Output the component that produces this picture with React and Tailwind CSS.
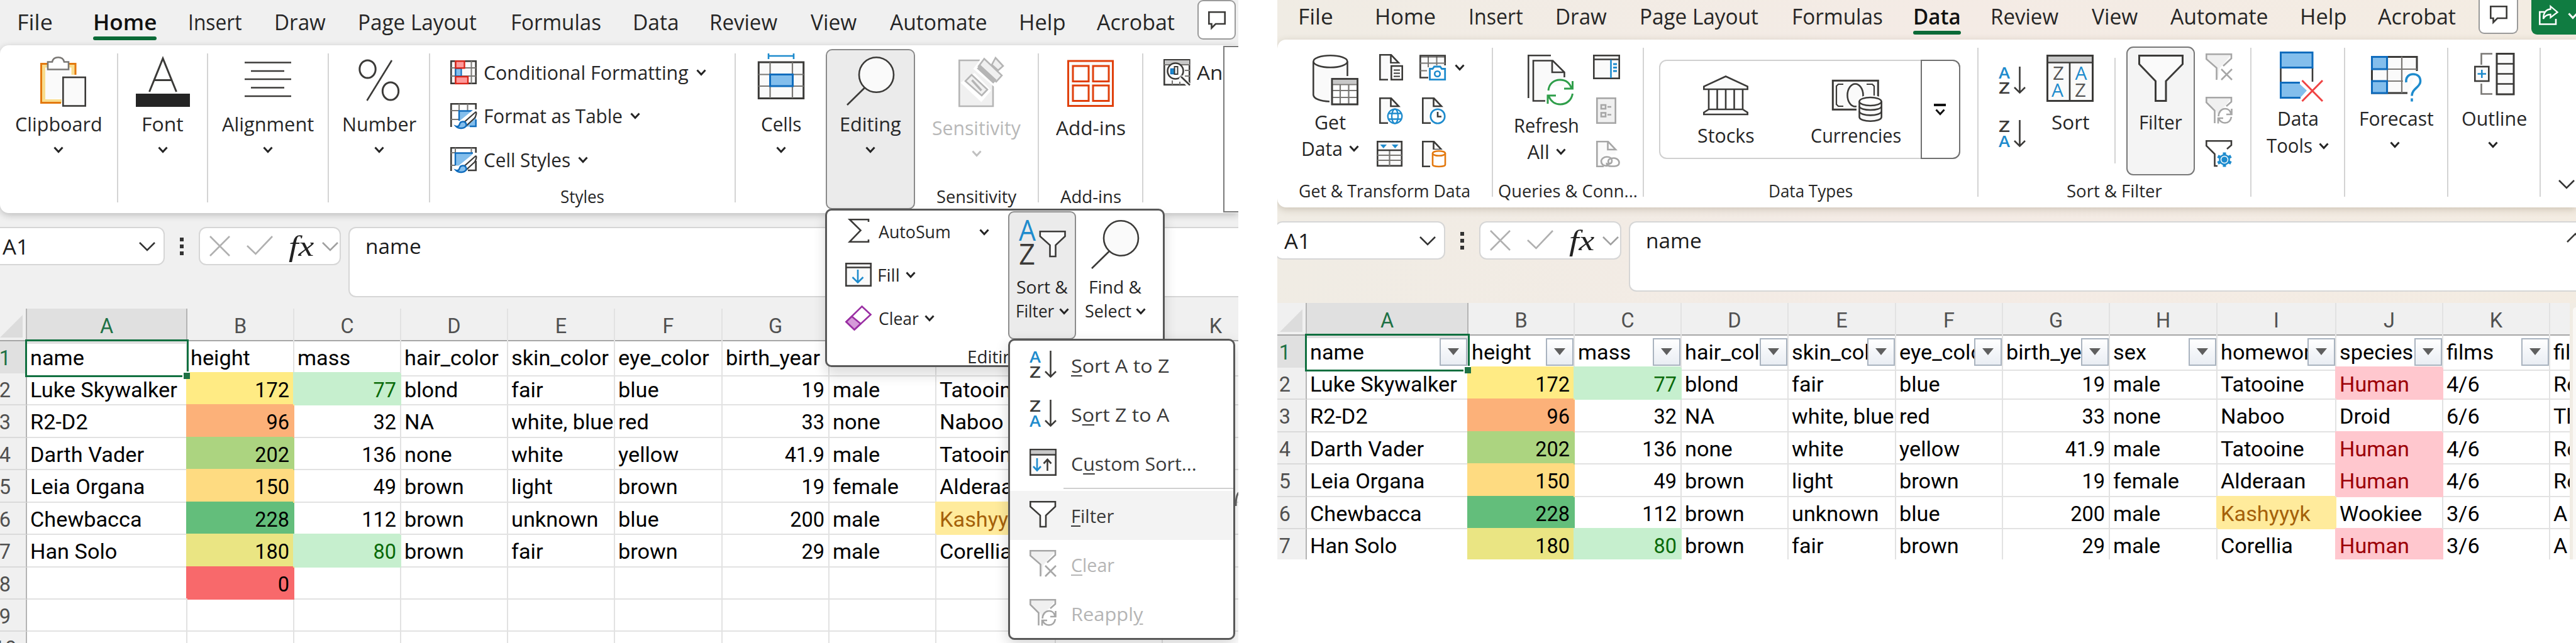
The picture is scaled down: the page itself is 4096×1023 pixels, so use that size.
import React, { useLayoutEffect, useRef, useState } from 'react';

const INK = '#3b3a38';
const MID = '#797774';
const BLUE = '#1e8bcd';
const DEEP = '#0f6cbd';
const SKY = '#83beec';
const PAPER = '#fafafa';
const MUTED = '#a6a6a6';

/* Text condensed or widened to fill the width given by its class. */
function T({ className = '', children }) {
  const outer = useRef(null);
  const inner = useRef(null);
  const [scale, setScale] = useState(1);
  useLayoutEffect(() => {
    setScale(outer.current.clientWidth / inner.current.offsetWidth);
  }, []);
  return (
    <span ref={outer} className={'block shrink-0 whitespace-nowrap ' + className}>
      <span ref={inner} className="inline-block origin-left" style={{ transform: `scaleX(${scale})` }}>
        {children}
      </span>
    </span>
  );
}

function Svg({ w, h, className = '', children, stroke = INK, sw = 2.6 }) {
  return (
    <svg width={w} height={h} viewBox={`0 0 ${w} ${h}`} fill="none" stroke={stroke} strokeWidth={sw} className={'block shrink-0 overflow-visible ' + className}>
      {children}
    </svg>
  );
}

const Chev = ({ className = '', color = '#242424' }) => (
  <Svg w={16} h={10} stroke={color} sw={3} className={className}><path d="M1.5 1.5 8 8.5 14.5 1.5" /></Svg>
);
const WideChev = ({ className = '', color = '#333' }) => (
  <Svg w={26} h={14} stroke={color} sw={2.6} className={className}><path d="M1 1 13 13 25 1" /></Svg>
);

/* ---------- icons ---------- */
const ClipboardIcon = () => (
  <Svg w={73} h={80}>
    <path d="M34 74H1.5V11.5H56V29" fill="#fff" stroke="none" />
    <path d="M34 71H5V14.5H52.5V29" stroke="#f9dc8d" strokeWidth="6" />
    <path d="M33 73.5H1.5V11.5H56V29" stroke="#e3790f" strokeWidth="3" />
    <path d="M8 68V18H48V30H33V66Z" fill={PAPER} stroke="none" />
    <path d="M12 20.5V8.5H19C20 3.5 24 1.2 28.5 1.2S37 3.5 38 8.5H45V20.5Z" fill="#fff" stroke={MID} />
    <rect x="36.3" y="33" width="35.4" height="45.5" fill={PAPER} />
  </Svg>
);
const FontIcon = () => (
  <Svg w={86} h={80}>
    <path d="M21.5 56 43 3 64.5 56M29 37.5H57" strokeWidth="3" />
    <rect x="0" y="59" width="86" height="21" fill="#242424" stroke="none" />
  </Svg>
);
const AlignIcon = () => (
  <Svg w={74} h={80}><path d="M0 9.5H74M10 23H63M0 36H74M10 49.5H63M0 63H74" /></Svg>
);
const PercentIcon = () => (
  <Svg w={66} h={80} sw={3}><ellipse cx="14.5" cy="20" rx="12.7" ry="14" /><ellipse cx="51" cy="55" rx="12.7" ry="14" /><path d="M53 6 13.5 70" strokeWidth="2.6" /></Svg>
);
const CondFormatIcon = () => (
  <Svg w={42} h={38}>
    <rect x="1.3" y="1.3" width="39.4" height="35.4" fill={PAPER} />
    <path d="M8 1V37M33.5 1V37M1 12H41M1 25H41" stroke={MID} strokeWidth="2" />
    <rect x="8.5" y="13" width="9" height="12" fill={SKY} stroke={DEEP} strokeWidth="2" />
    <rect x="8.5" y="1.3" width="14" height="11" fill="#ff9a9a" stroke="#d9271b" strokeWidth="2.4" />
    <rect x="8.5" y="26" width="19.5" height="11" fill="#ff9a9a" stroke="#d9271b" strokeWidth="2.4" />
  </Svg>
);
const Brush = () => (
  <g>
    <path d="M42 11 20 40H8V34L36 11Z" fill="#fff" stroke="none" />
    <path d="M39.5 15C43 12 41 21 38.5 24L25.5 36 22 30.5Z" fill="#fff" strokeWidth="2.2" />
    <path d="M21 29.5C17 29 15 31.5 14.5 34.5C13.5 37 11.5 37.8 9 37C13 41.5 23 41 25.5 35.5C25.5 32 24 30 21 29.5Z" fill={SKY} stroke={DEEP} strokeWidth="2.4" />
  </g>
);
const TableStyleIcon = () => (
  <Svg w={42} h={40}>
    <path d="M1.3 38V1.3H40.7V10" fill="none" />
    <path d="M14 1V12M27.5 1V12M1 12H14M1 26H13" stroke={MID} strokeWidth="2" />
    <rect x="14" y="12.5" width="27" height="25" fill={SKY} stroke="none" />
    <path d="M14 28V12.5H36M40.7 26V37H31" stroke={DEEP} strokeWidth="2.4" />
    <Brush />
  </Svg>
);
const CellStyleIcon = () => (
  <Svg w={42} h={40}>
    <path d="M1.3 38V1.3H40.7V9M40.7 22V37H28" />
    <path d="M8 1V9M33.5 1V9M1 9H8M1 29H8" stroke={MID} strokeWidth="2" />
    <rect x="8" y="9.5" width="27" height="20" fill={SKY} stroke="none" />
    <path d="M8 29V9.5H36" stroke={DEEP} strokeWidth="2.4" />
    <Brush />
  </Svg>
);
const CellsIcon = () => (
  <Svg w={74} h={80}>
    <path d="M17 -1H57M17 -5V4M57 -5V4" stroke={BLUE} />
    <rect x="1.3" y="9" width="71.4" height="57.5" fill={PAPER} strokeWidth="3" />
    <path d="M19.5 9V66M55 9V66M1 28.5H73M1 47H73" stroke={MID} strokeWidth="2.2" />
    <rect x="19.5" y="28.5" width="36" height="18.5" fill={SKY} stroke={DEEP} strokeWidth="3" />
  </Svg>
);
const LensIcon = ({ fill = PAPER }) => (
  <Svg w={76} h={78}><ellipse cx="47.5" cy="29" rx="27.5" ry="27.8" fill={fill} /><path d="M29 49.5 1 77" /></Svg>
);
const SensIcon = () => (
  <Svg w={72} h={80} stroke="#b5b5b5">
    <path d="M55 40V79H1.3V6H34" fill="#f0f0f0" />
    <path d="M25 32 10.5 42 36 66 46 54Z" fill="#f0f0f0" strokeWidth="9" stroke="#fff" />
    <path d="M21 29 11 39 37 62 46 52.5Z" fill="#f0f0f0" />
    <path d="M21.5 37.5 36.5 54" strokeWidth="3.5" />
    <path d="M29 19 41 3 69 30 57 43Z" fill="#fff" stroke="#fff" strokeWidth="8" />
    <path d="M32 15.500 41 3.500 69 30 60 40Z" fill="#f0f0f0" />
    <path d="M32 16 58 40" strokeWidth="8" />
    <path d="M53 13 59 2 71 15 63 22Z" fill="#f0f0f0" />
  </Svg>
);
const AddinsIcon = () => (
  <Svg w={74} h={80} stroke="#e0400c" sw={3}>
    <rect x="1.500" y="7" width="71" height="71.500" fill={PAPER} />
    <rect x="9" y="15" width="25" height="24.500" fill="#fff" /><rect x="41" y="15" width="25" height="24.500" fill="#fff" />
    <rect x="9" y="46" width="25" height="24.500" fill="#fff" /><rect x="41" y="46" width="25" height="24.500" fill="#fff" />
  </Svg>
);
const AnalyzeIcon = () => (
  <Svg w={43} h={42}>
    <rect x="1.300" y="1.300" width="40" height="39.500" fill={PAPER} />
    <rect x="2" y="2" width="39" height="6" fill="#c8c8c8" stroke="none" />
    <path d="M1 9H42M34 18H42M34 27H42M14 34V41M26 36V41" stroke={MID} strokeWidth="2" />
    <circle cx="19" cy="19" r="12.500" fill="#fff" />
    <rect x="11.500" y="15.500" width="6" height="8" fill={BLUE} stroke={DEEP} strokeWidth="1.500" />
    <rect x="17.500" y="12" width="5" height="12" strokeWidth="2" />
    <path d="M27 28 42 43" stroke="#fff" strokeWidth="7" /><path d="M28 28 42 41.500" />
  </Svg>
);
const CommentIcon = () => (
  <Svg w={28} h={28} sw={2.600}><path d="M1.300 1.300H26.700V20H12L5.500 26.500V20H1.300Z" /></Svg>
);
const SigmaIcon = () => (
  <Svg w={42} h={38} className="-mt-1"><path d="M37 5V1.300H7L24.500 18.500 7 36.700H37V33" /></Svg>
);
const FillIcon = () => (
  <Svg w={42} h={38}><rect x="1.300" y="1.300" width="39.400" height="35.400" fill={PAPER} /><path d="M1 7.500H41" /><path d="M20 11V32M11.500 23 20 31.500 28.500 23" stroke={BLUE} /></Svg>
);
const EraserIcon = () => (
  <Svg w={42} h={40} stroke="#9a2fa3"><path d="M26.500 1.500 40.500 14.500 14.500 38.500 1.500 26Z" fill="#fff" /><path d="M10.500 17.500 24.500 29 14.500 38.500 1.500 26Z" fill="#d59ad9" /></Svg>
);
const Funnel = 'M1.300 1.300H41V9L26 23V41H17V23L1.300 9Z';
const SortFilterIcon = () => (
  <Svg w={75} h={72}>
    <g stroke="none" className="font-['Open_Sans']" fontSize="45" fontWeight="400">
      <text x="0" y="32" textLength="27" lengthAdjust="spacingAndGlyphs" fill={BLUE}>A</text>
      <text x="0" y="70" textLength="26" lengthAdjust="spacingAndGlyphs" fill={INK}>Z</text>
    </g>
    <g transform="translate(32.500 16)"><path d={Funnel} fill={PAPER} /></g>
  </Svg>
);
function AZIcon({ flip }) {
  return (
    <Svg w={43} h={43}>
      <g stroke="none" className="font-['Open_Sans']" fontSize="26" fontWeight="600">
        <text x="0" y="19" textLength="18" lengthAdjust="spacingAndGlyphs" fill={flip ? INK : BLUE}>{flip ? 'Z' : 'A'}</text>
        <text x="0" y="42.500" textLength="18" lengthAdjust="spacingAndGlyphs" fill={flip ? BLUE : INK}>{flip ? 'A' : 'Z'}</text>
      </g>
      <path d="M33.500 0V42M25 33 33.500 41.500 42 33" />
    </Svg>
  );
}
const CustomSortIcon = () => (
  <Svg w={43} h={43}>
    <rect x="1.300" y="1.300" width="40.400" height="40.400" fill={PAPER} />
    <rect x="2.500" y="2.500" width="38" height="6" fill="#c8c8c8" stroke="none" /><path d="M1 9.500H42" />
    <path d="M12 15V34M6 28 12 34.500 18 28" stroke={BLUE} /><path d="M28.500 35V17M22.500 23.500 28.500 17 34.500 23.500" />
  </Svg>
);
const FilterIcon = () => <Svg w={43} h={43}><path d={Funnel} fill="#fff" /></Svg>;
const FilterX = () => (
  <Svg w={43} h={43} stroke={MUTED}><path d="M2 2H41L22 24 20 40H17V23L2 9Z" fill="#f0f0f0" stroke="none" /><path d="M17.500 42V23L1.300 9V1.300H41V8L28 20M25 25 42 42M42 25 25 42" /></Svg>
);
const Cycle = () => <path d="M20.500 31C21 24 25 19 31 19S39 22 40.500 27M41.500 19V28H33M41 32C40 38 36 41.500 31 41.500S23 39 21 35M20 42.500V34H28" />;
const FilterCycle = () => (
  <Svg w={43} h={43} stroke={MUTED}><path d="M2 2H41L30 16 18 28 17 23 2 9Z" fill="#f0f0f0" stroke="none" /><path d="M14.500 42V22L1.300 9V1.300H41V8L33 15" /><Cycle /></Svg>
);
const FilterGear = () => (
  <Svg w={43} h={43}><path d="M19 41H14.500V22L1.300 9V1.300H41V8L34 14" />
    <g stroke={BLUE}><circle cx="30" cy="31" r="3.500" fill={BLUE} /><circle cx="30" cy="31" r="7.500" />
      <path d="M30 19.500V24M30 38V42.500M19.500 25.500 23.500 27.500M40.500 25.500 36.500 27.500M19.500 36.500 23.500 34.500M40.500 36.500 36.500 34.500" strokeWidth="5" /></g>
  </Svg>
);
const BigFilterIcon = () => (
  <Svg w={72} h={75} sw={3}><path d="M1.500 1.500H70.500V15L44 42V73.500H27.500V42L1.500 15Z" fill={PAPER} /></Svg>
);
const GetDataIcon = () => (
  <Svg w={73} h={80}>
    <path d="M1.300 11V65C2 70 12 74.500 27 74.500V38H55V11" fill={PAPER} stroke="none" />
    <path d="M1.300 11V64C2 70 12 74 27 74.500M55.500 11V34" />
    <ellipse cx="28.400" cy="10.700" rx="27" ry="9.500" fill="#fff" />
    <rect x="31" y="38.500" width="40.500" height="40.500" fill="#fff" />
    <rect x="32" y="39.500" width="38.500" height="7" fill="#c8c8c8" stroke="none" />
    <path d="M31 47.500H71M31 57H71M31 68H71M44 47V79M57.500 47V79" stroke={MID} strokeWidth="2.200" />
    <rect x="31" y="38.500" width="40.500" height="40.500" />
  </Svg>
);
function Doc({ children, stroke = INK }) {
  return (
    <Svg w={38} h={42} stroke={stroke}>
      <path d="M1.300 1.300H19L31 14V40.700H1.300Z" fill={PAPER} stroke="none" />
      <path d="M14 40.700H1.300V1.300H19L31 14H18.500V1.300" />
      {children}
    </Svg>
  );
}
const DocText = () => (
  <Doc><rect x="15" y="15" width="24" height="28" fill="#fff" stroke="none" /><rect x="19.300" y="19" width="17.400" height="21.700" fill="#fff" /><path d="M23 25.500H33M23 30.500H33M23 35.500H33" strokeWidth="2" /></Doc>
);
const DocWeb = () => (
  <Doc><circle cx="25" cy="30" r="14" fill="#fff" stroke="none" /><g stroke={BLUE} strokeWidth="2.300"><circle cx="25" cy="30" r="11.300" fill="#fff" /><ellipse cx="25" cy="30" rx="5" ry="11.300" /><path d="M15 25.500H35M15 34.500H35" /></g></Doc>
);
const DocClock = () => (
  <Doc><circle cx="25" cy="30" r="14" fill="#fff" stroke="none" /><circle cx="25" cy="30" r="11.300" fill="#fff" stroke={BLUE} /><path d="M25 23V30.500H31" /></Doc>
);
const DocDb = () => (
  <Doc><rect x="13" y="14" width="27" height="30" fill="#fff" stroke="none" /><path d="M17 20V38C17 42 37 42 37 38V20" fill="#fff" stroke="#e3790f" /><ellipse cx="27" cy="20" rx="10" ry="3.800" fill="#fff" stroke="#e3790f" /></Doc>
);
const TableCamera = () => (
  <Svg w={42} h={42}>
    <path d="M14 37.500H1.300V2.500H40.700V18" fill={PAPER} />
    <path d="M1 14.500H41M1 26.500H12M14 3V21M27.500 3V18" stroke={MID} strokeWidth="2" />
    <rect x="2" y="3" width="38" height="3" fill={INK} stroke="none" opacity=".5" />
    <path d="M16.500 23.500H21L23.500 20H33L35.500 23.500H40.700V40.700H16.500Z" fill="#fff" stroke={BLUE} strokeWidth="2.800" />
    <circle cx="28.500" cy="31.500" r="4.300" stroke={BLUE} />
  </Svg>
);
const TableRange = () => (
  <Svg w={42} h={42} className="-ml-1">
    <rect x="1.300" y="1.300" width="38.500" height="38.500" fill={PAPER} />
    <path d="M1 15H40M1 23H40M1 31H40M20.500 15V40" stroke={MID} strokeWidth="2.200" /><path d="M1 15H40" />
    <path d="M5.500 6H16L10.800 12ZM24 6H34.500L29.300 12Z" fill={BLUE} stroke="none" />
  </Svg>
);
const RefreshIcon = () => (
  <Svg w={73} h={80}>
    <path d="M37 1.300H1.300V69" />
    <path d="M28 73.500H9V9.500H40L58 28V50H30V73Z" fill={PAPER} stroke="none" />
    <path d="M28 73.500H9V9.500H40L58.500 28V36M39 9.500V28H58" />
    <g stroke="#2f9e4a" strokeWidth="3"><path d="M33 57C34 46 42 40 51.500 40S67 45 70 54M71.500 42V54H58M71.500 62C70 72 62 79 52 79S37 74 33.500 66M32 78V65H45" /></g>
  </Svg>
);
const PaneIcon = () => (
  <Svg w={43} h={39}><rect x="1.300" y="1.300" width="40.400" height="36.400" fill={PAPER} /><path d="M1 7.500H42" /><path d="M28.500 8V37" stroke={BLUE} /><path d="M32 15H38M32 20.500H38M32 26H38" stroke={BLUE} strokeWidth="3" /></Svg>
);
const PropsIcon = () => (
  <Svg w={32} h={42} stroke={MUTED}><rect x="1.300" y="1.300" width="29.400" height="39.400" fill="#f0f0f0" /><rect x="8" y="12" width="7" height="6" /><rect x="8" y="24.500" width="7" height="6" /><path d="M18 15H24M18 27.500H24" /></Svg>
);
const LinkDoc = () => (
  <Doc stroke={MUTED}>
    <path d="M12 22H38V43H12Z" fill="#fff" stroke="none" />
    <path d="M18 40C10 40 8 36 8 32.500S12 25.500 17 25.500 25 28 25 32 22 37 18 37M22 37C18 35 18 29 24 28M24 40.500C19 40.500 16 38 17 35M24 28C31 26 36 30 36.500 34S34 40.500 29 40.500H24" />
  </Doc>
);
const BankIcon = () => (
  <Svg w={72} h={63}>
    <path d="M1.300 22V17.500L36 1.500 70.700 17.500V22Z" fill={PAPER} /><path d="M9 22V54M22.500 22V54M36 22V54M49.500 22V54M63 22V54M9 54H63L70.700 59V62H1.300V59L9 54" />
  </Svg>
);
const MoneyIcon = () => (
  <Svg w={80} h={67}>
    <rect x="1.300" y="1.300" width="72" height="46" fill={PAPER} strokeWidth="3" />
    <path d="M18 7H10L7 10V39L10 42H18M55 7H64L67 10V28" strokeWidth="2.200" /><ellipse cx="37" cy="24.500" rx="12.500" ry="18" />
    <path d="M39 66V33C42 26 60 22 76 27V66Z" fill="#fff" stroke="none" />
    <path d="M43.500 34V59C43.500 68 78.700 68 78.700 59V34" fill={PAPER} /><ellipse cx="61" cy="34.500" rx="17.500" ry="6.500" fill="#fff" />
    <path d="M43.500 42C44 50 78 50 78.700 42M43.500 50C44 58.500 78 58.500 78.700 50" />
  </Svg>
);
const SortDialogIcon = () => (
  <Svg w={75} h={75}>
    <rect x="1.500" y="1.500" width="72" height="72" fill={PAPER} strokeWidth="3" /><rect x="3" y="3" width="69" height="8" fill="#c8c8c8" stroke="none" /><path d="M1 12.500H74M37 12V74" />
    <g stroke="none" className="font-['Open_Sans']" fontSize="30">
      <text x="10" y="40" textLength="18" lengthAdjust="spacingAndGlyphs" fill="#555">Z</text><text x="8" y="67" textLength="19" lengthAdjust="spacingAndGlyphs" fill={BLUE}>A</text>
      <text x="45.500" y="40" textLength="19" lengthAdjust="spacingAndGlyphs" fill={BLUE}>A</text><text x="45" y="67" textLength="18" lengthAdjust="spacingAndGlyphs" fill="#555">Z</text>
    </g>
  </Svg>
);
const DataToolsIcon = () => (
  <Svg w={69} h={80}>
    <path d="M1.500 26V49M52 26V48" />
    <rect x="1.500" y="1.500" width="50.500" height="24" fill={SKY} stroke={DEEP} strokeWidth="3" />
    <path d="M33 73.500H1.500V49.500H32" fill={SKY} stroke={DEEP} strokeWidth="3" /><path d="M31 51 43 62 34 72H30Z" fill={SKY} stroke="none" />
    <path d="M35.500 46 68 79M68 46 35.500 79" stroke="#f04343" strokeWidth="3" />
  </Svg>
);
const ForecastIcon = () => (
  <Svg w={80} h={73}>
    <path d="M58 59H1.500V1.500H73V24" fill={PAPER} strokeWidth="3" />
    <path d="M26 1V59M49 1V59M1 21H73M1 40H52" stroke={MID} strokeWidth="2.200" />
    <rect x="1.500" y="1.500" width="24" height="19.500" fill={SKY} stroke={DEEP} strokeWidth="3" /><rect x="1.500" y="40" width="24" height="19" fill={SKY} stroke={DEEP} strokeWidth="3" />
    <path d="M56 42C55 34 60 29 67 29S79 33 78.500 41C78 50 65 52 65 62" stroke="#fff" strokeWidth="10" />
    <path d="M56 42C55 34 60 29 67 29S79 33 78.500 41C78 50 65 52 65 63.500M65 67.500V72.500" stroke={BLUE} strokeWidth="3.600" />
  </Svg>
);
const OutlineIcon = () => (
  <Svg w={64} h={67}>
    <path d="M29 1.500H11.500V19M11.500 49V65.500H29" stroke={MID} />
    <rect x="1.300" y="22" width="22" height="23" fill={PAPER} /><path d="M12.300 27V40M5.500 33.500H19" stroke={BLUE} />
    <rect x="36" y="1.500" width="27" height="64.500" fill={PAPER} strokeWidth="3" /><path d="M36 17.500H63M36 33.500H63M36 49.500H63" />
  </Svg>
);
const ShareIcon = () => (
  <Svg w={31} h={32} stroke="#fff"><path d="M9 11H1.300V30.500H27V22" /><path d="M18.500 2 29.500 11.500 18.500 20V15C13 15 9.500 17 7 22C7 14 10 7.500 18.500 6.500Z" strokeWidth="2.300" /></Svg>
);

/* ---------- ribbon parts ---------- */
const Sep = () => <div className="mt-[13px] h-[237px] w-[2px] shrink-0 bg-[#d4d4d4]" />;

function Group({ className = '', label, labelW = '', children }) {
  return (
    <div className={'flex h-full shrink-0 flex-col ' + className}>
      {children}
      {label && <T className={'mx-auto mt-auto mb-[8px] text-[27px] leading-[36px] ' + labelW}>{label}</T>}
    </div>
  );
}

function BigButton({ icon, label, w, iconClass = 'h-[98px] pt-[18px]' }) {
  return (
    <div className="flex flex-col items-center">
      <div className={'flex items-start ' + iconClass}>{icon}</div>
      <T className={'mt-[7px] leading-[40px] ' + w}>{label}</T>
      <Chev className="mt-[16px]" />
    </div>
  );
}

function StyleRow({ icon, label, w }) {
  return (
    <div className="flex h-[69.500px] items-center">
      {icon}
      <T className={'ml-[11px] leading-[40px] ' + w}>{label}</T>
      <Chev className="ml-[12px]" />
    </div>
  );
}

function Tab({ label, className, active }) {
  return (
    <div className={'shrink-0 ' + className}>
      <T className={active ? 'w-full font-semibold text-[#111]' : 'w-full'}>{label}</T>
      {active && <div className="mt-[1px] h-[6px] rounded-full bg-[#0b6a37]" />}
    </div>
  );
}

function FormulaBar({ nameBox }) {
  return (
    <div className="flex h-[152px] items-start pt-[22px] text-[33px] leading-[44px] text-[#1b1b1b]">
      <div className={'flex h-[61px] shrink-0 items-center rounded-[12px] border-2 border-[#d6d6d6] bg-white pr-[13px] ' + nameBox}>
        <T className="mt-[2px] w-[42px]">A1</T>
        <WideChev className="ml-auto" />
      </div>
      <div className="ml-[24px] flex h-[61px] w-[6px] shrink-0 flex-col items-center justify-center gap-[5px]">
        <div className="h-[6px] w-[6px] bg-[#333]" />
        <div className="h-[6px] w-[6px] bg-[#333]" />
        <div className="h-[6px] w-[6px] bg-[#333]" />
      </div>
      <div className="ml-[24px] flex h-[61px] w-[226px] shrink-0 items-center rounded-[12px] border-2 border-[#d6d6d6] bg-white pl-[16px]">
        <Svg w={31} h={31} stroke="#b0b0b0"><path d="M0 0 31 31M31 0 0 31" /></Svg>
        <Svg w={42} h={31} stroke="#b0b0b0" className="ml-[27px]"><path d="M1 15 14.500 28 41 0" /></Svg>
        <T className="ml-[25px] w-[40px] font-['Liberation_Serif'] text-[46px] text-[#222] italic">fx</T>
        <WideChev className="ml-[13px]" color="#a0a0a0" />
      </div>
      <div className="ml-[12px] flex h-[112px] grow items-start overflow-hidden rounded-l-[12px] border-2 border-r-0 border-[#d6d6d6] bg-white pt-[7px] pl-[25px]">
        <T className="w-[89px]">name</T>
      </div>
    </div>
  );
}

/* ---------- worksheet ---------- */
const ROWS = [
  ['name', 'height', 'mass', 'hair_color', 'skin_color', 'eye_color', 'birth_year', 'sex', 'homeworld', 'species', 'films', 'film_titles'],
  ['Luke Skywalker', '172', '77', 'blond', 'fair', 'blue', '19', 'male', 'Tatooine', 'Human', '4/6', 'Return'],
  ['R2-D2', '96', '32', 'NA', 'white, blue', 'red', '33', 'none', 'Naboo', 'Droid', '6/6', 'The'],
  ['Darth Vader', '202', '136', 'none', 'white', 'yellow', '41.9', 'male', 'Tatooine', 'Human', '4/6', 'Return'],
  ['Leia Organa', '150', '49', 'brown', 'light', 'brown', '19', 'female', 'Alderaan', 'Human', '4/6', 'Return'],
  ['Chewbacca', '228', '112', 'brown', 'unknown', 'blue', '200', 'male', 'Kashyyyk', 'Wookiee', '3/6', 'A New'],
  ['Han Solo', '180', '80', 'brown', 'fair', 'brown', '29', 'male', 'Corellia', 'Human', '3/6', 'A New'],
];
const HEIGHT_FILL = {
  172: 'bg-[#ffeb84] border-[#ffeb84] shadow-[-2px_-2px_0_0_#ffeb84]',
  96: 'bg-[#fcb179] border-[#fcb179] shadow-[-2px_-2px_0_0_#fcb179]',
  202: 'bg-[#acd480] border-[#acd480] shadow-[-2px_-2px_0_0_#acd480]',
  150: 'bg-[#fedb81] border-[#fedb81] shadow-[-2px_-2px_0_0_#fedb81]',
  228: 'bg-[#63be7b] border-[#63be7b] shadow-[-2px_-2px_0_0_#63be7b]',
  180: 'bg-[#eae583] border-[#eae583] shadow-[-2px_-2px_0_0_#eae583]',
  0: 'bg-[#f8696b] border-[#f8696b] shadow-[-2px_-2px_0_0_#f8696b]',
};
const GREEN = 'bg-[#c6efce] border-[#c6efce] shadow-[-2px_-2px_0_0_#c6efce] text-[#0a6a0a]';
const PINK = 'bg-[#ffc7ce] border-[#ffc7ce] shadow-[-2px_-2px_0_0_#ffc7ce] text-[#9c0006]';
const AMBER = 'bg-[#ffeb9c] border-[#ffeb9c] shadow-[-2px_-2px_0_0_#ffeb9c] text-[#a5610a]';

function fillOf(col, text) {
  if (text === undefined || text === '') return 'border-[#e2e2e2]';
  if (col === 1 && HEIGHT_FILL[text]) return HEIGHT_FILL[text];
  if (col === 2 && (text === '77' || text === '80')) return GREEN;
  if (text === 'Human') return PINK;
  if (text === 'Kashyyyk') return AMBER;
  return 'border-[#e2e2e2]';
}

function FilterButton() {
  return (
    <span className="absolute top-[4px] right-0 flex h-[44px] w-[44px] items-center justify-center border-2 border-[#a9b3bf] bg-linear-to-b from-white to-[#e9edf3]">
      <Svg w={18} h={11}><path d="M0 0H18L9 11Z" fill="#5f5f5f" stroke="none" /></Svg>
    </span>
  );
}

function Sheet({ cols, rows, filters }) {
  return (
    <div className="bg-white font-['Roboto'] text-[32.500px] text-black">
      <div className={'grid h-[51.500px] border-b-2 border-[#a6a6a6] bg-[#f0f0f0] leading-[56px] text-[#505050] ' + cols}>
        <div className="flex items-center justify-end border-r-2 border-[#b4b4b4] pr-[5px]">
          <Svg w={36} h={36}><path d="M36 0V36H0Z" fill="#dcdcdc" stroke="none" /></Svg>
        </div>
        {'ABCDEFGHIJKL'.split('').map((c, i) => (
          <div key={c} className={i === 0 ? 'border-r-2 border-[#b4b4b4] bg-[#e0e0e0] text-center text-[#1e7145]' : 'overflow-hidden border-r-2 border-[#e2e2e2] text-center'}>
            <span className="inline-block">{i === 11 ? '' : c}</span>
          </div>
        ))}
      </div>
      {rows.map((r, ri) => (
        <div key={ri} className={'grid h-[51.450px] leading-[54px] ' + cols}>
          <div className={(ri === 0 ? 'border-b-2 border-[#b4b4b4] bg-[#e0e0e0] text-[#1e7145] ' : 'border-b-2 border-b-[#dadada] bg-[#f0f0f0] text-[#505050] ') + 'flex justify-end overflow-hidden border-r-2 border-r-[#b4b4b4]'}>
            <span className="w-[66px] shrink-0 text-center">{ri + 1}</span>
          </div>
          {Array.from({ length: 12 }, (_, ci) => {
            const text = r[ci];
            const num = ri > 0 && (ci === 1 || ci === 2 || ci === 6);
            return (
              <div key={ci} className={'relative min-w-0 border-r-2 border-b-2 whitespace-nowrap ' + (num ? 'pr-[6px] text-right ' : 'pl-[5px] ') + (ri === 0 && ci === 0 ? '' : 'overflow-hidden ') + fillOf(ci, text)}>
                <span className={num ? '' : 'inline-block origin-left scale-x-[1.055]'}>{text}</span>
                {filters && ri === 0 && ci < 11 && <FilterButton />}
                {ri === 0 && ci === 0 && (
                  <>
                    <span className="absolute -top-[3px] -right-[4px] -bottom-[3px] -left-[3px] z-10 border-[3px] border-[#107040]" />
                    <span className="absolute -right-[6px] -bottom-[6px] z-10 h-[12px] w-[12px] border-t-2 border-l-2 border-white bg-[#1e7145]" />
                  </>
                )}
              </div>
            );
          })}
        </div>
      ))}
    </div>
  );
}

/* ---------- left window ---------- */
function EditingPopup() {
  return (
    <div className="absolute top-[332px] left-[1312px] z-20 flex h-[252px] w-[540px] flex-col rounded-[10px] border-[3px] border-[#585858] bg-white text-[26.500px] shadow-[0_12px_20px_rgba(0,0,0,0.14)]">
      <div className="flex h-[205px] leading-[38px]">
        <div className="flex w-[288px] flex-col pl-[29px]">
          <div className="flex h-[69px] items-center"><SigmaIcon /><T className="ml-[11px] w-[115px]">AutoSum</T><Chev className="ml-[45px]" /></div>
          <div className="flex h-[70px] items-center"><FillIcon /><T className="mt-[2px] ml-[9px] w-[36px]">Fill</T><Chev className="ml-[9px]" /></div>
          <div className="flex h-[69px] items-center"><EraserIcon /><T className="mt-[2px] ml-[11px] w-[64px]">Clear</T><Chev className="ml-[9px]" /></div>
        </div>
        <div className="mt-[1px] flex w-[108px] flex-col items-center rounded-[9px] border-2 border-[#8c8c8c] bg-[#ebebeb] pt-[13px]">
          <SortFilterIcon />
          <T className="mt-[15px] w-[82px]">Sort &amp;</T>
          <div className="flex items-center"><T className="w-[61px]">Filter</T><Chev className="ml-[8px]" /></div>
        </div>
        <div className="flex grow flex-col items-center pt-[15px] pr-[14px]">
          <LensIcon />
          <T className="mt-[10px] w-[84px]">Find &amp;</T>
          <div className="flex items-center"><T className="w-[74px]">Select</T><Chev className="ml-[7px]" /></div>
        </div>
      </div>
      <T className="mx-auto mt-auto mb-[-5px] w-[88px] leading-[36px]">Editing</T>
    </div>
  );
}

const MENU = [
  { icon: <AZIcon />, text: <><u>S</u>ort A to Z</>, w: 'w-[156px]' },
  { icon: <AZIcon flip />, text: <>S<u>o</u>rt Z to A</>, w: 'w-[156px]' },
  { icon: <CustomSortIcon />, text: <>C<u>u</u>stom Sort...</>, w: 'w-[200px]' },
  { icon: <FilterIcon />, text: <><u>F</u>ilter</>, w: 'w-[68px]', hot: true },
  { icon: <FilterX />, text: <><u>C</u>lear</>, w: 'w-[69px]', off: true },
  { icon: <FilterCycle />, text: <>Reappl<u>y</u></>, w: 'w-[115px]', off: true },
];

function SortMenu() {
  return (
    <div className="absolute top-[539px] left-[1603px] z-30 flex h-[479px] w-[361px] flex-col overflow-hidden rounded-[10px] border-[3px] border-[#585858] bg-white text-[29.500px] leading-[40px] shadow-[0_8px_22px_rgba(0,0,0,0.16)]">
      {MENU.map((m, i) => (
        <React.Fragment key={i}>
          {i === 3 && <div className="ml-[85px] h-[5px] shrink-0 border-t-2 border-[#d0d0d0]" />}
          <div className={'flex h-[78px] shrink-0 items-center pl-[31px] ' + (m.hot ? 'bg-[#f3f3f3] ' : '') + (m.off ? 'text-[#b5b5b5]' : 'text-[#3a3a3a]')}>
            <div className="-mt-[4px]">{m.icon}</div>
            <T className={'mt-[2px] ml-[23px] underline-offset-4 ' + m.w}>{m.text}</T>
          </div>
        </React.Fragment>
      ))}
    </div>
  );
}

const LEFT_COLS = 'grid-cols-[43px_255px_170px_170px_170px_170px_171px_170px_170px_190px_170px_170px_170px]';
const RIGHT_COLS = 'grid-cols-[47px_257px_169px_170px_170px_171px_170px_170px_171px_189px_170px_170px_170px]';

function LeftWindow() {
  return (
    <section className="relative h-[1023px] w-[1969px] shrink-0 overflow-hidden bg-[#f0f0f0]">
      <div className="flex h-[72px] items-start text-[34px] leading-[44px]">
        <Tab label="File" className="mt-[13px] ml-[27px] w-[57px]" />
        <Tab label="Home" className="mt-[13px] ml-[64px] w-[101px]" active />
        <Tab label="Insert" className="mt-[13px] ml-[50px] w-[86px]" />
        <Tab label="Draw" className="mt-[13px] ml-[51px] w-[82px]" />
        <Tab label="Page Layout" className="mt-[13px] ml-[51px] w-[189px]" />
        <Tab label="Formulas" className="mt-[13px] ml-[54px] w-[144px]" />
        <Tab label="Data" className="mt-[13px] ml-[50px] w-[74px]" />
        <Tab label="Review" className="mt-[13px] ml-[48px] w-[108px]" />
        <Tab label="View" className="mt-[13px] ml-[53px] w-[73px]" />
        <Tab label="Automate" className="mt-[13px] ml-[53px] w-[155px]" />
        <Tab label="Help" className="mt-[13px] ml-[50px] w-[75px]" />
        <Tab label="Acrobat" className="mt-[13px] ml-[49px] w-[124px]" />
        <div className="ml-[36px] flex h-[63px] w-[61px] shrink-0 items-center justify-center rounded-[9px] border-2 border-[#9a9a9a] bg-white"><CommentIcon /></div>
      </div>
      <div className="relative flex h-[267px] rounded-l-[14px] bg-white text-[31px] shadow-[0_3px_12px_rgba(0,0,0,0.22)]">
        <Group className="w-[186px]"><BigButton icon={<ClipboardIcon />} iconClass="h-[98px] pt-[18px] pl-[15px]" label="Clipboard" w="w-[139px]" /></Group>
        <Sep />
        <Group className="w-[141px]"><BigButton icon={<FontIcon />} label="Font" w="w-[67px]" /></Group>
        <Sep />
        <Group className="w-[190px]"><BigButton icon={<AlignIcon />} label="Alignment" w="w-[146px]" /></Group>
        <Sep />
        <Group className="w-[159px]"><BigButton icon={<PercentIcon />} label="Number" w="w-[118px]" /></Group>
        <Sep />
        <Group className="w-[484px]" label="Styles" labelW="w-[70px]">
          <div className="pt-[8px] pl-[32px]">
            <StyleRow icon={<CondFormatIcon />} label="Conditional Formatting" w="w-[326px]" />
            <StyleRow icon={<TableStyleIcon />} label="Format as Table" w="w-[221px]" />
            <StyleRow icon={<CellStyleIcon />} label="Cell Styles" w="w-[138px]" />
          </div>
        </Group>
        <Sep />
        <Group className="w-[143px]"><BigButton icon={<CellsIcon />} label="Cells" w="w-[64px]" /></Group>
        <div className="mt-[6px] h-[255px] w-[142px] shrink-0 rounded-[10px] border-2 border-[#8a8a8a] bg-[#ebebeb]">
          <BigButton icon={<LensIcon />} iconClass="h-[90px] pt-[10px]" label="Editing" w="w-[98px]" />
        </div>
        <Group className="w-[195px]" label="Sensitivity" labelW="w-[127px]">
          <div className="flex flex-col items-center pt-[18px] text-[#b8b8b8]">
            <div className="pl-[14px]"><SensIcon /></div>
            <T className="mt-[13px] w-[141px] leading-[40px]">Sensitivity</T>
            <Chev className="mt-[16px]" color="#c0c0c0" />
          </div>
        </Group>
        <Sep />
        <Group className="w-[164px]" label="Add-ins" labelW="w-[97px]">
          <div className="flex flex-col items-center pt-[18px]">
            <AddinsIcon />
            <T className="mt-[13px] w-[111px] leading-[40px]">Add-ins</T>
          </div>
        </Group>
        <Sep />
        <div className="flex h-[86px] w-[127px] shrink-0 items-center overflow-hidden pl-[32px]"><AnalyzeIcon /><T className="ml-[10px] w-[60px] leading-[40px]">Ana</T></div>
        <div className="mt-[1px] h-[265px] w-[26px] shrink-0 border-2 border-r-0 border-[#7a7a7a] bg-white" />
      </div>
      <FormulaBar nameBox="-ml-[12px] w-[274px] pl-[14px]" />
      <Sheet cols={LEFT_COLS} rows={[...ROWS, ['', '0'], [], []]} />
      <EditingPopup />
      <SortMenu />
      <svg width="8" height="26" viewBox="0 0 8 26" fill="none" stroke="#666" strokeWidth="3" className="absolute top-[781px] left-[1963px]"><path d="M8 2C4 4 2 10 2 24" /></svg>
    </section>
  );
}

/* ---------- right window ---------- */
function SmallCol({ children, className = '' }) {
  return <div className={'grid auto-rows-[69px] items-center pt-[9px] ' + className}>{children}</div>;
}

function RightWindow() {
  return (
    <section className="ml-[62px] h-[890px] w-[2065px] shrink-0 overflow-hidden bg-[#f1ece4]">
      <div className="bg-linear-to-r from-[#f0ece4] via-[#f4ebe5] to-[#f3ece2]">
        <div className="flex h-[63px] items-start text-[34px] leading-[44px]">
          <Tab label="File" className="mt-[4px] ml-[33px] w-[56px]" />
          <Tab label="Home" className="mt-[4px] ml-[66px] w-[97px]" />
          <Tab label="Insert" className="mt-[4px] ml-[52px] w-[87px]" />
          <Tab label="Draw" className="mt-[4px] ml-[51px] w-[82px]" />
          <Tab label="Page Layout" className="mt-[4px] ml-[52px] w-[189px]" />
          <Tab label="Formulas" className="mt-[4px] ml-[53px] w-[145px]" />
          <Tab label="Data" className="mt-[4px] ml-[48px] w-[76px]" active />
          <Tab label="Review" className="mt-[4px] ml-[47px] w-[108px]" />
          <Tab label="View" className="mt-[4px] ml-[53px] w-[73px]" />
          <Tab label="Automate" className="mt-[4px] ml-[52px] w-[156px]" />
          <Tab label="Help" className="mt-[4px] ml-[50px] w-[75px]" />
          <Tab label="Acrobat" className="mt-[4px] ml-[49px] w-[124px]" />
          <div className="ml-[36px] flex h-[54px] w-[63px] shrink-0 items-start justify-center rounded-b-[9px] border-2 border-t-0 border-[#9a9a9a] bg-white pt-[9px]"><CommentIcon /></div>
          <div className="ml-[21px] flex h-[55px] w-[71px] shrink-0 items-start gap-[15px] overflow-hidden rounded-bl-[9px] bg-[#107c41] pt-[8px] pl-[12px]"><ShareIcon /><Chev color="#fff" className="mt-[12px]" /></div>
        </div>
        <div className="relative flex h-[267px] rounded-l-[14px] bg-white text-[31px] shadow-[0_3px_12px_rgba(90,70,40,0.25)]">
          <Group className="w-[341px]" label="Get & Transform Data" labelW="w-[273px]">
            <div className="flex">
              <div className="ml-[34px] flex w-[100px] flex-col items-center pt-[24px] leading-[42px]">
                <div className="pl-[16px]"><GetDataIcon /></div>
                <T className="mt-[6px] w-[50px]">Get</T>
                <div className="flex items-center"><T className="w-[66px]">Data</T><Chev className="ml-[10px]" /></div>
              </div>
              <SmallCol className="ml-[28px] w-[42px]"><DocText /><DocWeb /><TableRange /></SmallCol>
              <SmallCol className="ml-[22px] w-[42px] justify-items-end"><TableCamera /><DocClock /><DocDb /></SmallCol>
              <SmallCol className="ml-[14px]"><Chev /></SmallCol>
            </div>
          </Group>
          <Sep />
          <Group className="w-[238px]" label="Queries & Conn..." labelW="w-[222px]">
            <div className="flex">
              <div className="ml-[30px] flex w-[110px] flex-col items-center pt-[24px] leading-[42px]">
                <div className="pl-[13px]"><RefreshIcon /></div>
                <T className="mt-[11px] w-[104px]">Refresh</T>
                <div className="flex items-center"><T className="w-[35px]">All</T><Chev className="ml-[10px]" /></div>
              </div>
              <SmallCol className="ml-[19px] w-[43px]"><PaneIcon /><div className="pl-[5px]"><PropsIcon /></div><div className="pl-[5px]"><LinkDoc /></div></SmallCol>
            </div>
          </Group>
          <Sep />
          <Group className="w-[530px]" label="Data Types" labelW="w-[134px]">
            <div className="mt-[32px] ml-[24px] flex h-[158px] w-[479px] rounded-[12px] border-2 border-[#d0d0d0]">
              <div className="flex w-[208px] flex-col items-center leading-[40px]">
                <div className="h-[98px] pt-[23px]"><BankIcon /></div>
                <T className="w-[91px]">Stocks</T>
              </div>
              <div className="flex w-[206px] flex-col items-center leading-[40px]">
                <div className="h-[98px] pt-[30px] pl-[4px]"><MoneyIcon /></div>
                <T className="w-[144px]">Currencies</T>
              </div>
              <div className="-my-[2px] -mr-[2px] flex grow flex-col items-center justify-center gap-[4px] rounded-r-[12px] border-2 border-[#707070] pr-[2px]">
                <div className="h-[4px] w-[19px] bg-[#111]" />
                <Chev color="#111" />
              </div>
            </div>
          </Group>
          <Sep />
          <Group className="w-[432px]" label="Sort & Filter" labelW="w-[152px]">
            <div className="flex items-start">
              <div className="mt-[43px] ml-[32px] grid gap-[42px]"><AZIcon /><AZIcon flip /></div>
              <div className="ml-[33px] flex w-[75px] flex-col items-center pt-[24px] leading-[42px]">
                <SortDialogIcon />
                <T className="mt-[11px] w-[60px]">Sort</T>
              </div>
              <div className="mt-[29px] ml-[33px] h-[168px] w-[2px] bg-[#d4d4d4]" />
              <div className="mt-[11px] ml-[17px] flex h-[205px] w-[109px] flex-col items-center rounded-[11px] border-2 border-[#777] bg-[#f4f4f4] pt-[11px] leading-[42px]">
                <BigFilterIcon />
                <T className="mt-[11px] w-[69px]">Filter</T>
              </div>
              <SmallCol className="ml-[17px]"><FilterX /><FilterCycle /><FilterGear /></SmallCol>
            </div>
          </Group>
          <Sep />
          <Group className="w-[147px]">
            <div className="flex flex-col items-center pt-[19px] leading-[43px]">
              <div className="h-[85px] pl-[12px]"><DataToolsIcon /></div>
              <T className="w-[66px]">Data</T>
              <div className="flex items-center"><T className="w-[73px]">Tools</T><Chev className="ml-[10px]" /></div>
            </div>
          </Group>
          <Sep />
          <Group className="w-[162px]">
            <div className="flex flex-col items-center pt-[26px] leading-[43px]">
              <div className="h-[78px]"><ForecastIcon /></div>
              <T className="w-[119px]">Forecast</T>
              <Chev className="mt-[15px] mr-[4px]" />
            </div>
          </Group>
          <Sep />
          <Group className="w-[145px]">
            <div className="flex flex-col items-center pt-[21px] leading-[43px]">
              <div className="h-[83px]"><OutlineIcon /></div>
              <T className="w-[104px]">Outline</T>
              <Chev className="mt-[15px] mr-[4px]" />
            </div>
          </Group>
          <Sep />
          <div className="flex grow items-end pb-[30px] pl-[28px]"><WideChev /></div>
        </div>
        <div className="flex">
          <div className="w-[2065px] shrink-0"><FormulaBar nameBox="-ml-[4px] w-[271px] pl-[13px]" /></div>
          <Svg w={26} h={14} className="mt-[41px] -ml-[14px]"><path d="M0 14 13 1 26 14" /></Svg>
        </div>
      </div>
      <div className="flex">
        <div className="w-[2055px] shrink-0 overflow-hidden"><Sheet cols={RIGHT_COLS} rows={ROWS} filters /></div>
        <div className="mt-[7px] ml-[5px] h-[420px] w-[10px] rounded-tl-[6px] bg-[#faf8f5]" />
      </div>
    </section>
  );
}

export default function App() {
  return (
    <main className="flex h-[1023px] w-[4096px] items-start overflow-hidden bg-white font-['Open_Sans',sans-serif] text-[#262626]">
      <LeftWindow />
      <RightWindow />
    </main>
  );
}
